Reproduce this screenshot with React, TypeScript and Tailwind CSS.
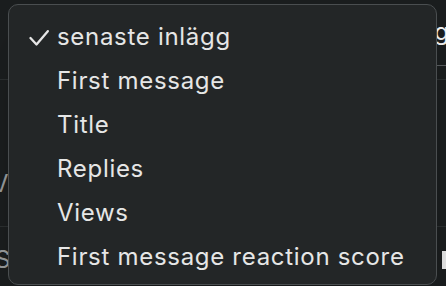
const options = [
  "senaste inlägg",
  "First message",
  "Title",
  "Replies",
  "Views",
  "First message reaction score",
];

function CheckMark() {
  return (
    <svg width="20" height="16" viewBox="0 0 20 16" fill="none" className="mt-[1px]">
      <path d="M1.5 8 L7.5 14.5 L18.8 1.2" stroke="#e6e6e6" strokeWidth="2.3" strokeLinecap="round" strokeLinejoin="round" />
    </svg>
  );
}

export default function App() {
  return (
    <div className="relative h-[286px] w-[446px] overflow-hidden bg-[#1b1e1f] font-['Inter',sans-serif] text-[24px]">
      {/* page behind the menu */}
      <div className="flex h-full flex-col">
        <div className="flex h-[80px] justify-end border-b border-[#2c3031]">
          <div className="mt-[20px] flex h-[46px] flex-col items-end justify-between">
            <span className="-mr-[3px] leading-none text-[#f2f2f2]">g</span>
            <span className="h-px w-[10px] bg-[#5a5e60]" />
          </div>
        </div>
        <div className="flex h-[147px] items-end border-b border-[#2c3031] pb-[30px]">
          <span className="-ml-[8px] leading-none text-[#9a9d9e]">Vi</span>
        </div>
        <div className="flex flex-1 items-center justify-between pt-[6px]">
          <span className="-ml-[5px] leading-none text-[#9a9d9e]">S</span>
          <span className="h-[18px] w-[4px] bg-[#e8e8e8]" />
        </div>
      </div>

      {/* dropdown menu */}
      <div className="absolute left-[8px] top-[4px] h-[281px] w-[429px] rounded-[10px] border border-[#4a4e50] bg-[#232627] shadow-2xl">
        <ul className="flex flex-col pt-[10px]">
          {options.map((o, i) => (
            <li key={o} className="flex h-[44px] items-center tracking-[0.7px] text-[#e6e6e6]">
              <span className="flex w-[48px] justify-end pr-[8px]">
                {i === 0 && <CheckMark />}
              </span>
              {o}
            </li>
          ))}
        </ul>
      </div>
    </div>
  );
}
